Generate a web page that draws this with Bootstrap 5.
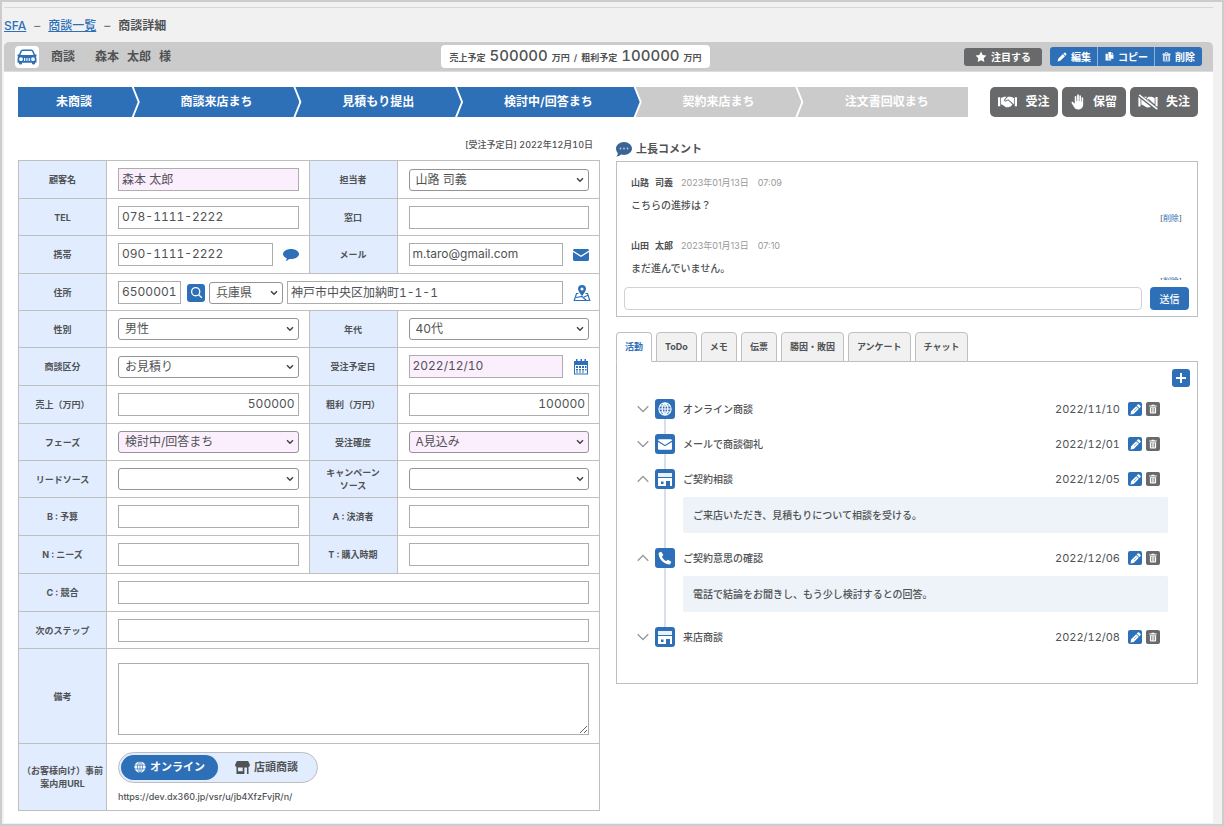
<!DOCTYPE html>
<html lang="ja">
<head>
<meta charset="utf-8">
<meta name="viewport" content="width=device-width, initial-scale=1">
<title>商談詳細 - SFA</title>
<link href="https://cdn.jsdelivr.net/npm/bootstrap@5.3.0/dist/css/bootstrap.min.css" rel="stylesheet">
<style>
:root{--blue:#2e70b7;--ink:#505254;--line:#bfbfbf;--gray:#68696b;--pale:#e1edff;--pink:#fbeefd}
body{font:12px/16px Inter,"Noto Sans CJK JP",sans-serif;font-variant-numeric:tabular-nums;color:var(--ink);background:#f1f1f1}
input,select,textarea,button{font-variant-numeric:tabular-nums}
a{color:var(--blue)}
svg{fill:currentColor;display:block;flex:none}
.frame{min-height:100vh;border:2px solid #ccc;padding:5px 9px 0 2px}
.crumbs{border-top:1px solid #d7d7d7;height:35px;padding-top:10px;font-weight:500}
.crumbs .breadcrumb-item{padding:0}
.crumbs .breadcrumb-item+.breadcrumb-item::before{content:"–";padding:0 8px;color:#777}
.crumbs .active{color:var(--ink);font-weight:600}
.titlebar{background:#cbcbcb;border-radius:5px 5px 0 0;height:30px;padding:0 11px;border-bottom:1px solid #ddd}
.logo-tile{width:24px;height:22px;color:var(--blue)}
.sum-pill{height:23px;padding:2px 8px 0;gap:4px;line-height:17px;font-size:9px;font-weight:600;white-space:nowrap;border-radius:4px}
.sum-pill b{font-size:15px;font-weight:500}
.btn{--bs-btn-border-width:0;--bs-btn-line-height:1;display:inline-flex;align-items:center;justify-content:center;font-weight:700;white-space:nowrap}
.btn-brand{--bs-btn-bg:var(--blue);--bs-btn-color:#fff;--bs-btn-hover-bg:#255d9a;--bs-btn-hover-color:#fff}
.btn-ash{--bs-btn-bg:var(--gray);--bs-btn-color:#fff;--bs-btn-hover-bg:#555;--bs-btn-hover-color:#fff}
.btn-star{height:18px;width:78px;font-size:10px;padding:0;gap:4px;border-radius:3px}
.edit-group .btn{height:19px;font-size:10px;padding:0 7px;gap:4px;border-radius:3px}
.edit-group .btn+.btn{border-left:1px solid #8fb2d9}
.sheet{padding:15px 15px 12px 14px}
.steps{height:30px;color:#fff;font-weight:600}
.steps li{display:flex;align-items:center;justify-content:center;background:var(--blue);min-width:0;white-space:nowrap;margin-left:-4px;
 clip-path:polygon(0 0,calc(100% - 6px) 0,100% 50%,calc(100% - 6px) 100%,0 100%,6px 50%)}
.steps li:first-child{margin-left:0;padding-right:8px;clip-path:polygon(0 0,calc(100% - 6px) 0,100% 50%,calc(100% - 6px) 100%,0 100%)}
.steps li:last-child{padding-left:8px;clip-path:polygon(0 0,100% 0,100% 100%,0 100%,6px 50%)}
.steps .todo{background:#cbcbcb}
.w-a{flex:112}.w-b{flex:166}.w-c{flex:183}.w-d{flex:163}
.outcome{gap:4px;margin-left:22px}
.outcome .btn{height:30px;width:68px;padding:0;gap:8px;font-size:12px;border-radius:5px}
.outcome .btn-mid{width:64px}
.cap{height:43px}
.due{font-size:9px;font-weight:500;padding:20px 7px 0 0;line-height:16px}
.deal{width:100%;table-layout:fixed;border-collapse:collapse}
.deal th,.deal td{border:1px solid var(--line)}
.deal th{background:var(--pale);font-size:9px;line-height:13px;font-weight:700;text-align:center;padding:0}
.deal td{padding:7px 10px 7px 11px}
.deal .snug td{padding-bottom:6px}
.c-th{width:88px}
.deal .form-control,.deal .form-select{font-size:12px;line-height:16px;color:var(--ink);border:1px solid #adadad;min-width:0}
.deal .form-control{height:23px;padding:0 3px 2px;border-radius:0}
.deal .form-select{height:22px;padding:0 20px 0 6px;border-radius:3px;border-color:#949494;background:#fff url("data:image/svg+xml,%3Csvg xmlns='http://www.w3.org/2000/svg' viewBox='0 0 8 6'%3E%3Cpath d='M1 1.2l3 3 3-3' fill='none' stroke='%23444' stroke-width='1.5'/%3E%3C/svg%3E") no-repeat right 4px center/8px 6px}
.deal .must{background-color:var(--pink)}
.deal textarea.form-control{height:72px;margin:7px 0 1px;resize:vertical}
.side{width:16px;margin-left:10px;color:var(--blue)}
.zip{width:63px!important;flex:none}.pref{width:74px!important;flex:none}
.sq{width:18px;height:18px;padding:0;border-radius:3px}
.find{flex:none;margin:0 4px 0 6px}
.mode{height:31px;width:200px;padding:2px;border:1px solid #bdbdbd;border-radius:16px;background:var(--pale);font-size:11px;font-weight:700}
.mode .btn{height:25px;font-size:11px;border-radius:13px;padding:0;flex:1;gap:4px;color:var(--ink)}
.mode .btn-check:checked+.btn{background:var(--blue);color:#fff}
.url{font-size:9px;font-weight:500;line-height:12px;margin-top:8px}
.cell-url{height:67px}
.panel-line{border:1px solid var(--line);background:#fff}
.boss{height:44px;font-size:11px;font-weight:700;margin:0;padding-top:21px;line-height:22px}
.talk{height:118px;overflow-y:auto;scrollbar-width:none;padding:13px 15px 0 14px}
.talk::-webkit-scrollbar{display:none}
.talk article{height:63px;font-size:9px}
.talk b{gap:6px}
.talk p{font-size:10px;font-weight:500;margin:0;padding-top:6px;line-height:16px}
.talk time{color:#999;font-variant-numeric:normal}
.talk .del{font-size:8px;line-height:10px;text-align:right}
.talk .del a{text-decoration:none}
.send{padding:7px 8px 6px 7px;gap:8px}
.send .form-control{height:23px;border-radius:4px;border:1px solid #d2d2d2;padding:0 6px;font-size:12px}
.send .btn{flex:none;width:39px;height:23px;font-size:10px;padding:0;border-radius:4px;font-weight:500}
.tabs{margin-top:15px;gap:4px;border:0}
.tabs .nav-link{height:30px;padding:0 8px;font-size:9px;font-weight:700;color:var(--ink);background:#f1f1f1;border:1px solid var(--line);border-radius:4px 4px 0 0;margin:0}
.tabs .nav-link.active{background:#fff;color:var(--blue);border-color:var(--line) var(--line) #fff;position:relative;z-index:1}
.acts{margin-top:-1px;padding:7px 7px 21px 20px}
.log{margin:12px 22px 0 0;padding:0;list-style:none}
.log li{position:relative;padding-bottom:15px}
.log li:not(:last-child)::before{content:"";position:absolute;left:27px;top:10px;bottom:-10px;width:2px;background:#d9dfe9}
.log .line{height:20px;position:relative;padding-right:8px}
.fold{border:0;background:none;padding:0;color:#999;width:12px;margin-right:6px}
.kind{width:20px;height:20px;border-radius:3px;background:var(--blue);color:#fff;margin-right:8px}
.what{font-size:10px;font-weight:500}
.log time{font-size:11px}
.mini{width:14px;height:14px;padding:0;border-radius:2px}
.memo{margin:8px 0 0 46px;height:36px;line-height:36px;padding:0 10px;background:#edf3f8;border-radius:2px;font-size:10px;font-weight:500}
</style>
</head>
<body>
<svg width="0" height="0" class="position-absolute" aria-hidden="true">
<symbol id="i-car" viewBox="0 0 20 16"><path fill-rule="evenodd" d="M6 .5h8c1.500 0 2.300.700 2.800 2l1.200 3h1.500v2h-.8c.5.700.8 1.400.8 2.500v3c0 .5-.3.800-.8.800h-.7v.7c0 .500-.4.900-1 .9h-1c-.6 0-1-.4-1-.9v-.700H5v.7c0 .5-.4.900-1 .9H3c-.6 0-1-.4-1-.9v-.700h-.7c-.5 0-.8-.300-.8-.8V10c0-1.100.3-1.800.8-2.500H.5v-2H2l1.200-3C3.700 1.200 4.500.5 6 .5zM6 2c-.8 0-1.100.3-1.400 1L3.500 6h13l-1.100-3c-.3-.7-.6-1-1.400-1zM4 8.300a1.900 1.900 0 100 3.800 1.900 1.900 0 000-3.800zm12 0a1.900 1.900 0 100 3.800 1.900 1.900 0 000-3.800zM7 9v3h1V9zm1.800 0v3h.8V9zm1.700 0v3h.8V9zM12.200 9v3h.9V9z"/></symbol>
<symbol id="i-star" viewBox="0 0 16 16"><path d="M8 .8l2.200 4.600 5 .7-3.600 3.500.9 5L8 12.200l-4.500 2.400.9-5L.8 6.100l5-.7z"/></symbol>
<symbol id="i-pen" viewBox="0 0 16 16"><path d="M11.500 1.200a1.200 1.200 0 011.700 0l1.600 1.600a1.200 1.200 0 010 1.700l-1.300 1.300-3.300-3.300zM9.400 3.300l3.300 3.300-7.500 7.500L1 15l.9-4.200z"/></symbol>
<symbol id="i-pen2" viewBox="0 0 16 16"><path fill-rule="evenodd" d="M11.200.9a1.500 1.500 0 012.100 0l1.800 1.800a1.500 1.500 0 010 2.100l-1.400 1.400-3.900-3.900zM9 3.100 12.900 7l-7.500 7.500L.8 15.300l.8-4.700zM5.500 10l.5.500 4-4-.5-.5z"/></symbol>
<symbol id="i-copy" viewBox="0 0 16 16"><path d="M6 0h5v5h4v7H6zM12 0l3 4h-3zM1 3h4v10h6v2H1z"/></symbol>
<symbol id="i-trash" viewBox="0 0 16 16"><path fill-rule="evenodd" d="M6 1h4l.7 1.500H14V4H2V2.500h3.300zM3 5h10v8.500c0 .9-.6 1.500-1.500 1.500h-7C3.600 15 3 14.400 3 13.500zm2 1.500v7h1v-7zm2.500 0v7h1v-7zm2.500 0v7h1v-7z"/></symbol>
<symbol id="i-trash2" viewBox="0 0 16 16"><path d="M6 .5h4v2h4.500V4h-13V2.500H6zM2.500 5h11v10h-11zM5 6.500v7M8 6.500v7M11 6.500v7" fill="none" stroke="currentColor" stroke-width="1.500"/></symbol>
<symbol id="i-shake" viewBox="0 0 22 16"><path d="M0 2.500h2.600v10.500H0zM19.400 2.500H22V13h-2.600zM3.500 3.500 7 2h3L7.200 5.200c-.6.8.3 2.800 2.200 2.200L11.600 6l4.600 4.200c1 1-.1 2.100-.9 1.700.3 1-.8 1.800-1.700 1.300-.2.900-1.400 1.200-2.200.6-.7.700-1.900.5-2.600-.1L4.600 11H3.500z"/><path d="M11.500 2H15l3.500 1.500v6.700l-.8-.1L11.800 4.700 9.300 6.300c-.8.400-1.300-.3-.9-.8z"/></symbol>
<symbol id="i-hand" viewBox="0 0 16 18"><path d="M7 1.200C7-.2 9-.2 9 1.200V8h.6V2.400c0-1.300 1.900-1.300 1.900 0V8.600h.6V4.600c0-1.200 1.800-1.200 1.800 0v7.100c0 3.600-2.200 6-5.600 6-2.500 0-3.700-1-4.900-2.900L.8 10.500c-.8-1.200.9-2.200 1.700-1.300L4.300 11V2.900c0-1.200 1.900-1.200 1.900 0V8H7z"/></symbol>
<symbol id="i-globe" viewBox="0 0 16 16"><path d="M8 1a7 7 0 100 14A7 7 0 008 1zM1 8h14M8 1v14M8 1C3.500 4.500 3.500 11.500 8 15 12.500 11.500 12.500 4.500 8 1M2.200 4.500h11.600M2.200 11.500h11.600" fill="none" stroke="currentColor" stroke-width="1.200"/></symbol>
<symbol id="i-globe2" viewBox="0 0 16 16"><circle cx="8" cy="8" r="7.500"/><path d="M0 5.500h16M0 10.500h16M8 0v16M8 0C3.500 4 3.500 12 8 16c4.500-4 4.500-12 0-16" fill="none" stroke="#2e70b7" stroke-width=".9"/></symbol>
<symbol id="i-shop" viewBox="0 0 14 13"><path opacity=".9" d="M0 0h14v4H0z"/><path fill-rule="evenodd" d="M0 5h14v8h-2V8H8v5H0zM3 8.500v2.500h2.500V8.500z"/></symbol>
<symbol id="i-store" viewBox="0 0 16 14"><path fill-rule="evenodd" d="M2 0h12l2 4c0 1.500-.8 2.300-1.500 2.400V14h-1.700V7H10v7H1.500V6.400C.8 6.300 0 5.500 0 4zM3.200 7v4h5V7z"/></symbol>
<symbol id="i-mail" viewBox="0 0 16 12"><path d="M0 1.500C0 .7.600 0 1.400 0h13.200c.8 0 1.400.700 1.400 1.500L8 6.600zM0 3l8 5.100L16 3v7.600c0 .8-.6 1.400-1.400 1.400H1.400C.6 12 0 11.400 0 10.600z"/></symbol>
<symbol id="i-bub" viewBox="0 0 16 12"><path d="M8 0c4.400 0 8 2.200 8 5s-3.600 5-8 5c-.6 0-1.100 0-1.700-.1C5 11.200 3.600 11.800 2.500 11.900c.8-.7 1.200-1.600 1.300-2.700C1.500 8.300 0 6.800 0 5c0-2.800 3.600-5 8-5z"/></symbol>
<symbol id="i-find" viewBox="0 0 16 16"><path d="M7 2a5 5 0 100 10A5 5 0 007 2zM10.700 10.700 14.500 14.500" fill="none" stroke="currentColor" stroke-width="1.600"/></symbol>
<symbol id="i-map" viewBox="0 0 18 18"><path fill-rule="evenodd" d="M9 1a4 4 0 014 4c0 2.200-2.200 4-3.300 6.600H8.300C7.200 9 5 7.200 5 5a4 4 0 014-4zm0 2.500a1.500 1.500 0 100 3 1.500 1.500 0 000-3z"/><path d="M5.500 9.500H3.500L1.200 16.500h15.600L14.500 9.500h-2M3 13.500l6-1 4.500 4M11 13l4.500-2" fill="none" stroke="currentColor" stroke-width="1.200"/></symbol>
<symbol id="i-cal" viewBox="0 0 16 16"><path fill-rule="evenodd" d="M3 0h1.500v2h3V0H9v2h2.500V0H13v2h2v13.500H1V2h2zM2 6v8.500h12V6z"/><path d="M3 7h2v2H3zM6 7h2v2H6zM9 7h2v2H9zM12 7h1.500v2H12zM3 10h2v1.500H3zM6 10h2v1.500H6zM9 10h2v1.500H9zM12 10h1.500v1.500H12zM3 12.500h2v1H3zM6 12.500h2v1H6zM9 12.500h2v1H9z"/></symbol>
<symbol id="i-tel" viewBox="0 0 16 16"><path d="M3.700.8 6.100 4.700 4.500 6.500c.8 2.100 2.800 4.200 5 5l1.800-1.600 3.900 2.400-1 2.200c-.3.600-.9.900-1.600.8C6.400 14.700 1.300 9.600.7 3.400c0-.7.300-1.300.8-1.600z"/></symbol>
<symbol id="i-dn" viewBox="0 0 12 8"><path d="M.7 1.200 6 6.500l5.300-5.300" fill="none" stroke="currentColor" stroke-width="1.300"/></symbol>
<symbol id="i-up" viewBox="0 0 12 8"><path d="M.7 6.800 6 1.500l5.300 5.300" fill="none" stroke="currentColor" stroke-width="1.300"/></symbol>
</svg>

<div class="frame">
<nav class="crumbs" aria-label="breadcrumb"><ol class="breadcrumb m-0">
<li class="breadcrumb-item"><a href="#">SFA</a></li><li class="breadcrumb-item"><a href="#">商談一覧</a></li><li class="breadcrumb-item active" aria-current="page">商談詳細</li></ol></nav>

<header class="titlebar d-flex align-items-center justify-content-between">
<div class="d-flex align-items-center fw-bold pe-3">
<span class="logo-tile bg-white rounded-1 d-flex align-items-center justify-content-center"><svg width="20" height="16"><use href="#i-car"/></svg></span>
<span class="ms-2 ps-1">商談</span><span class="d-flex gap-2 ms-3 ps-1"><span>森本</span><span>太郎</span><span>様</span></span></div>
<div class="sum-pill bg-white d-flex align-items-baseline"><span>売上予定</span> <b>500000</b> <span>万円</span> / <span>粗利予定</span> <b>100000</b> <span>万円</span></div>
<div class="d-flex align-items-center gap-2">
<button class="btn btn-ash btn-star"><svg width="12" height="12"><use href="#i-star"/></svg>注目する</button>
<div class="btn-group edit-group" role="group">
<button class="btn btn-brand"><svg width="10" height="10"><use href="#i-pen"/></svg>編集</button><button class="btn btn-brand"><svg width="9" height="9"><use href="#i-copy"/></svg>コピー</button><button class="btn btn-brand"><svg width="9" height="10"><use href="#i-trash2"/></svg>削除</button></div></div>
</header>

<main class="sheet bg-white">
<div class="d-flex">
<ol class="steps list-unstyled d-flex flex-grow-1 m-0">
<li class="w-a">未商談</li><li class="w-b">商談来店まち</li><li class="w-b">見積もり提出</li><li class="w-c">検討中/回答まち</li><li class="w-b todo">契約来店まち</li><li class="w-d todo">注文書回収まち</li></ol>
<div class="outcome d-flex">
<button class="btn btn-ash"><svg width="19" height="14"><use href="#i-shake"/></svg>受注</button>
<button class="btn btn-ash btn-mid"><svg width="14" height="16"><use href="#i-hand"/></svg>保留</button>
<button class="btn btn-ash"><svg width="20" height="16" viewBox="0 0 22 18"><use href="#i-shake" width="22" height="16" y="1"/><path d="M1 1.500 21 17" stroke="#68696b" stroke-width="4"/><path d="M1 1 21.500 17" stroke="#fff" stroke-width="1.700"/></svg>失注</button></div>
</div>

<div class="row gx-3">
<section class="col-6">
<div class="cap due text-end">[受注予定日] 2022年12月10日</div>
<table class="deal">
<colgroup><col class="c-th"><col><col class="c-th"><col></colgroup>
<tr><th scope="row"><label for="f1">顧客名</label></th><td><input id="f1" class="form-control must" value="森本 太郎"></td><th scope="row"><label for="f2">担当者</label></th><td><select id="f2" class="form-select"><option>山路 司義</option></select></td></tr>
<tr class="snug"><th scope="row"><label for="f3">TEL</label></th><td><input id="f3" type="tel" class="form-control" value="078-1111-2222"></td><th scope="row"><label for="f4">窓口</label></th><td><input id="f4" class="form-control"></td></tr>
<tr><th scope="row"><label for="f5">携帯</label></th><td><div class="d-flex align-items-center"><input id="f5" type="tel" class="form-control" value="090-1111-2222"><a href="#" class="side" aria-label="SMS"><svg width="16" height="12"><use href="#i-bub"/></svg></a></div></td><th scope="row"><label for="f6">メール</label></th><td><div class="d-flex align-items-center"><input id="f6" type="email" class="form-control" value="m.taro@gmail.com"><a href="#" class="side" aria-label="メール"><svg width="16" height="12"><use href="#i-mail"/></svg></a></div></td></tr>
<tr class="snug"><th scope="row"><label for="f7">住所</label></th><td colspan="3"><div class="d-flex align-items-center"><input id="f7" class="form-control zip" value="6500001"><button class="btn btn-brand sq find" aria-label="検索"><svg width="13" height="13"><use href="#i-find"/></svg></button><select class="form-select pref me-1" aria-label="都道府県"><option>兵庫県</option></select><input class="form-control" aria-label="市区町村" value="神戸市中央区加納町1-1-1"><a href="#" class="side" aria-label="地図"><svg width="18" height="18"><use href="#i-map"/></svg></a></div></td></tr>
<tr><th scope="row"><label for="f8">性別</label></th><td><select id="f8" class="form-select"><option>男性</option></select></td><th scope="row"><label for="f9">年代</label></th><td><select id="f9" class="form-select"><option>40代</option></select></td></tr>
<tr><th scope="row"><label for="f10">商談区分</label></th><td><select id="f10" class="form-select"><option>お見積り</option></select></td><th scope="row"><label for="f11">受注予定日</label></th><td><div class="d-flex align-items-center"><input id="f11" class="form-control must" value="2022/12/10"><a href="#" class="side" aria-label="カレンダー"><svg width="16" height="16"><use href="#i-cal"/></svg></a></div></td></tr>
<tr><th scope="row"><label for="f12">売上（万円）</label></th><td><input id="f12" class="form-control text-end" value="500000"></td><th scope="row"><label for="f13">粗利（万円）</label></th><td><input id="f13" class="form-control text-end" value="100000"></td></tr>
<tr><th scope="row"><label for="f14">フェーズ</label></th><td><select id="f14" class="form-select must"><option>検討中/回答まち</option></select></td><th scope="row"><label for="f15">受注確度</label></th><td><select id="f15" class="form-select must"><option>A見込み</option></select></td></tr>
<tr><th scope="row"><label for="f16">リードソース</label></th><td><select id="f16" class="form-select"><option></option></select></td><th scope="row"><label for="f17">キャンペーン<br>ソース</label></th><td><select id="f17" class="form-select"><option></option></select></td></tr>
<tr><th scope="row"><label for="f18">B : 予算</label></th><td><input id="f18" class="form-control"></td><th scope="row"><label for="f19">A : 決済者</label></th><td><input id="f19" class="form-control"></td></tr>
<tr><th scope="row"><label for="f20">N : ニーズ</label></th><td><input id="f20" class="form-control"></td><th scope="row"><label for="f21">T : 購入時期</label></th><td><input id="f21" class="form-control"></td></tr>
<tr><th scope="row"><label for="f22">C : 競合</label></th><td colspan="3"><input id="f22" class="form-control"></td></tr>
<tr class="snug"><th scope="row"><label for="f23">次のステップ</label></th><td colspan="3"><input id="f23" class="form-control"></td></tr>
<tr><th scope="row"><label for="f24">備考</label></th><td colspan="3"><textarea id="f24" class="form-control"></textarea></td></tr>
<tr><th scope="row">（お客様向け）事前<br>案内用URL</th><td colspan="3" class="cell-url"><div class="mode d-flex"><input type="radio" class="btn-check" name="mode" id="m1" checked><label class="btn" for="m1"><svg width="12" height="12"><use href="#i-globe2"/></svg>オンライン</label><input type="radio" class="btn-check" name="mode" id="m2"><label class="btn" for="m2"><svg width="15" height="13"><use href="#i-store"/></svg>店頭商談</label></div><div class="url">https://dev.dx360.jp/vsr/u/jb4XfzFvjR/n/</div></td></tr>
</table>
</section>

<section class="col-6">
<h2 class="boss d-flex gap-1"><svg class="mt-1" width="16" height="15" viewBox="0 0 16 15"><path fill="#3a6496" d="M8 0c4.400 0 8 3 8 6.500S12.400 13 8 13c-1 0-2-.1-2.800-.4C3.800 13.800 2 14.500.3 14.700c.8-1 1.500-2 1.600-3.400C.7 10 0 8.400 0 6.500 0 3 3.600 0 8 0z"/><g fill="#b9cce2"><circle cx="4.500" cy="6.500" r=".9"/><circle cx="8" cy="6.500" r=".9"/><circle cx="11.500" cy="6.500" r=".9"/></g></svg>上長コメント</h2>
<div class="panel-line">
<div class="talk">
<article><div class="d-flex gap-2"><b class="d-flex"><span>山路</span><span>司義</span></b><time>2023年01月13日　07:09</time></div><p>こちらの進捗は？</p><div class="del">[<a href="#">削除</a>]</div></article>
<article><div class="d-flex gap-2"><b class="d-flex"><span>山田</span><span>太郎</span></b><time>2023年01月13日　07:10</time></div><p>まだ進んでいません。</p><div class="del">[<a href="#">削除</a>]</div></article>
</div>
<form class="send d-flex"><input class="form-control" aria-label="コメント"><button type="button" class="btn btn-brand">送信</button></form>
</div>

<ul class="tabs nav nav-tabs">
<li class="nav-item"><button class="nav-link active">活動</button></li><li class="nav-item"><button class="nav-link">ToDo</button></li><li class="nav-item"><button class="nav-link">メモ</button></li><li class="nav-item"><button class="nav-link">伝票</button></li><li class="nav-item"><button class="nav-link">勝因・敗因</button></li><li class="nav-item"><button class="nav-link">アンケート</button></li><li class="nav-item"><button class="nav-link">チャット</button></li></ul>
<div class="acts panel-line">
<div class="d-flex justify-content-end"><button class="btn btn-brand sq" aria-label="追加"><svg width="10" height="10" viewBox="0 0 10 10"><path d="M4 0h2v4h4v2H6v4H4V6H0V4h4z"/></svg></button></div>
<ul class="log">
<li><div class="line d-flex align-items-center"><button class="fold" aria-label="開く"><svg width="12" height="8"><use href="#i-dn"/></svg></button><span class="kind d-flex align-items-center justify-content-center"><svg width="14" height="14"><use href="#i-globe"/></svg></span><span class="what">オンライン商談</span><time class="ms-auto me-2">2022/11/10</time><button class="btn btn-brand mini me-1" aria-label="編集"><svg width="11" height="11"><use href="#i-pen2"/></svg></button><button class="btn btn-ash mini" aria-label="削除"><svg width="10" height="10"><use href="#i-trash"/></svg></button></div></li>
<li><div class="line d-flex align-items-center"><button class="fold" aria-label="開く"><svg width="12" height="8"><use href="#i-dn"/></svg></button><span class="kind d-flex align-items-center justify-content-center"><svg width="14" height="11"><use href="#i-mail"/></svg></span><span class="what">メールで商談御礼</span><time class="ms-auto me-2">2022/12/01</time><button class="btn btn-brand mini me-1" aria-label="編集"><svg width="11" height="11"><use href="#i-pen2"/></svg></button><button class="btn btn-ash mini" aria-label="削除"><svg width="10" height="10"><use href="#i-trash"/></svg></button></div></li>
<li><div class="line d-flex align-items-center"><button class="fold" aria-label="閉じる"><svg width="12" height="8"><use href="#i-up"/></svg></button><span class="kind d-flex align-items-center justify-content-center"><svg width="14" height="13"><use href="#i-shop"/></svg></span><span class="what">ご契約相談</span><time class="ms-auto me-2">2022/12/05</time><button class="btn btn-brand mini me-1" aria-label="編集"><svg width="11" height="11"><use href="#i-pen2"/></svg></button><button class="btn btn-ash mini" aria-label="削除"><svg width="10" height="10"><use href="#i-trash"/></svg></button></div><div class="memo">ご来店いただき、見積もりについて相談を受ける。</div></li>
<li><div class="line d-flex align-items-center"><button class="fold" aria-label="閉じる"><svg width="12" height="8"><use href="#i-up"/></svg></button><span class="kind d-flex align-items-center justify-content-center"><svg width="14" height="14"><use href="#i-tel"/></svg></span><span class="what">ご契約意思の確認</span><time class="ms-auto me-2">2022/12/06</time><button class="btn btn-brand mini me-1" aria-label="編集"><svg width="11" height="11"><use href="#i-pen2"/></svg></button><button class="btn btn-ash mini" aria-label="削除"><svg width="10" height="10"><use href="#i-trash"/></svg></button></div><div class="memo">電話で結論をお聞きし、もう少し検討するとの回答。</div></li>
<li><div class="line d-flex align-items-center"><button class="fold" aria-label="開く"><svg width="12" height="8"><use href="#i-dn"/></svg></button><span class="kind d-flex align-items-center justify-content-center"><svg width="14" height="13"><use href="#i-shop"/></svg></span><span class="what">来店商談</span><time class="ms-auto me-2">2022/12/08</time><button class="btn btn-brand mini me-1" aria-label="編集"><svg width="11" height="11"><use href="#i-pen2"/></svg></button><button class="btn btn-ash mini" aria-label="削除"><svg width="10" height="10"><use href="#i-trash"/></svg></button></div></li>
</ul>
</div>
</section>
</div>
</main>
</div>
<script src="https://cdn.jsdelivr.net/npm/bootstrap@5.3.0/dist/js/bootstrap.bundle.min.js"></script>
</body>
</html>
